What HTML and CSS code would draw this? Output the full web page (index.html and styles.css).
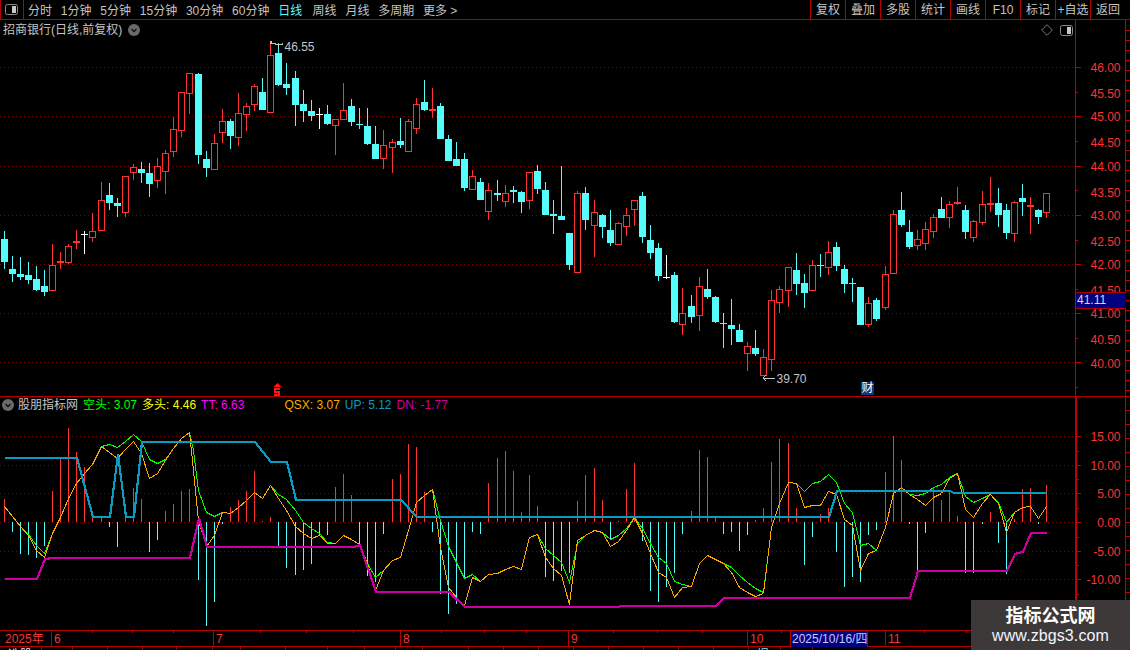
FILE: index.html
```html
<!DOCTYPE html>
<html lang="zh-CN">
<head>
<meta charset="utf-8">
<title>招商银行 日线</title>
<link rel="stylesheet" href="styles.css">
</head>
<body>
<div class="app">
  <header class="toolbar">
    <div class="panel-toggle">
      <svg class="panel-icon" width="13" height="11" viewBox="0 0 13 11"><rect x="0.5" y="0.5" width="12" height="10" rx="2" fill="none" stroke="#8a8a8a"/><rect x="7" y="2" width="4" height="7" fill="#c8c8c8"/></svg>
    </div>
    <nav class="periods">
      <span>分时</span><span>1分钟</span><span>5分钟</span><span>15分钟</span><span>30分钟</span><span>60分钟</span><span class="active">日线</span><span>周线</span><span>月线</span><span>多周期</span><span>更多 &gt;</span>
    </nav>
    <div class="actions">
      <span>复权</span><span>叠加</span><span>多股</span><span>统计</span><span>画线</span><span>F10</span><span>标记</span><span>+自选</span><span>返回</span>
    </div>
  </header>

  <section class="pane pane-main">
    <div class="plot">
      <svg id="main-plot" class="chart" width="1075" height="376" viewBox="0 20 1075 376"></svg>
      <div class="chart-title">
        <span>招商银行(日线,前复权)</span>
        <svg class="round-icon" width="12" height="12" viewBox="0 0 12 12"><circle cx="6" cy="6" r="6" fill="#6a6a6a"/><path d="M3.5 5l2.5 2.5L8.5 5" fill="none" stroke="#111" stroke-width="1.4"/></svg>
      </div>
      <div class="chart-tools">
        <svg width="12" height="12" viewBox="0 0 12 12"><path d="M6 .7L11.3 6 6 11.3.7 6z" fill="none" stroke="#777"/></svg>
        <svg width="13" height="11" viewBox="0 0 13 11"><rect x="0.5" y="0.5" width="12" height="10" rx="2" fill="none" stroke="#8a8a8a"/><rect x="7" y="2" width="4" height="7" fill="#c8c8c8"/></svg>
      </div>
      <span class="fin-mark">财</span>
    </div>
    <div class="axis">
      <svg id="main-axis" class="chart" width="55" height="376" viewBox="1075 20 55 376">
        <g class="axis-labels">
          <text x="1120.5" y="72">46.00</text><text x="1120.5" y="98">45.50</text>
          <text x="1120.5" y="121">45.00</text><text x="1120.5" y="147">44.50</text>
          <text x="1120.5" y="171">44.00</text><text x="1120.5" y="197">43.50</text>
          <text x="1120.5" y="220">43.00</text><text x="1120.5" y="246">42.50</text>
          <text x="1120.5" y="269">42.00</text><text x="1120.5" y="295">41.50</text>
          <text x="1120.5" y="318">41.00</text><text x="1120.5" y="344">40.50</text>
          <text x="1120.5" y="368">40.00</text>
        </g>
      </svg>
      <div class="price-tag">41.11</div>
    </div>
  </section>

  <section class="pane pane-sub">
    <div class="plot">
      <svg id="sub-plot" class="chart" width="1075" height="233" viewBox="0 397 1075 233"></svg>
      <div class="legend">
        <svg class="round-icon" width="12" height="12" viewBox="0 0 12 12"><circle cx="6" cy="6" r="6" fill="#6a6a6a"/><path d="M3.5 5l2.5 2.5L8.5 5" fill="none" stroke="#111" stroke-width="1.4"/></svg>
        <span class="legend-name">股朋指标网</span>
        <span class="lg-green">空头: 3.07</span>
        <span class="lg-yellow">多头: 4.46</span>
        <span class="lg-magenta">TT: 6.63</span>
        <span class="lg-orange">QSX: 3.07</span>
        <span class="lg-blue">UP: 5.12</span>
        <span class="lg-purple">DN: -1.77</span>
      </div>
    </div>
    <div class="axis axis-sub">
      <svg id="sub-axis" class="chart" width="55" height="233" viewBox="1075 397 55 233">
        <g class="axis-labels">
          <text x="1120.5" y="441">15.00</text><text x="1120.5" y="470">10.00</text>
          <text x="1120.5" y="498">5.00</text><text x="1120.5" y="527">0.00</text>
          <text x="1120.5" y="556">-5.00</text><text x="1120.5" y="584">-10.00</text>
        </g>
      </svg>
    </div>
  </section>

  <div class="datebar">
    <span>2025年</span><span class="sep">6</span><span class="sep">7</span><span class="sep">8</span><span class="sep">9</span><span class="sep">10</span><span class="date-now">2025/10/16/四</span><span></span><span class="sep">11</span>
    <svg id="date-ticks" class="date-ticks" width="971" height="4" viewBox="0 0 971 4"></svg>
  </div>

  <div class="tabs">
    <span class="tab-white">选股</span><span class="tab-white">·</span><span></span><span></span><span></span><span></span><span></span><span></span><span></span><span></span><span></span><span></span><span></span><span></span><span></span><span></span><span></span><span></span><span></span><span></span><span></span><span class="tab-cyan">提示</span><span></span>
  </div>

  <aside class="watermark">
    <strong>指标公式网</strong>
    <span>www.zbgs3.com</span>
  </aside>
</div>
<script src="chart.js"></script>
</body>
</html>
```
FILE: styles.css
```css
* { box-sizing: border-box; }
html, body {
  margin: 0;
  height: 100%;
  background: #000;
  overflow: hidden;
}
body {
  font: 12px/16px "Liberation Sans", "Noto Sans CJK SC", sans-serif;
  color: #c4c4c4;
}
.app {
  position: relative;
  width: 1130px;
  height: 650px;
  display: flex;
  flex-direction: column;
  overflow: hidden;
}

/* toolbar */
.toolbar {
  flex: none;
  height: 20px;
  display: flex;
  align-items: stretch;
  border-bottom: 1px solid #b40000;
}
.panel-toggle {
  width: 24px;
  display: flex;
  align-items: center;
  justify-content: center;
  padding-right: 2px;
  border-right: 1px solid #b40000;
  border-left: 1px solid #b40000;
}
.periods {
  display: flex;
  align-items: center;
  gap: 8.8px;
  padding: 2px 0 0 4px;
}
.periods .active { color: #54fcfc; margin-right: 1.5px; }
.actions {
  margin-left: auto;
  margin-right: 5px;
  display: flex;
}
.actions span {
  width: 35px;
  border-left: 1px solid #b40000;
  text-align: center;
  line-height: 21px;
}

/* panes */
.pane {
  flex: none;
  display: flex;
  border-bottom: 1px solid #b40000;
}
.pane-main { height: 377px; }
.pane-sub { height: 233px; border-bottom: 0; }
.plot {
  position: relative;
  width: 1075px;
  flex: none;
}
.axis {
  position: relative;
  width: 55px;
  flex: none;
}
.chart {
  display: block;
  shape-rendering: crispEdges;
}
.axis-labels text {
  fill: #ff3232;
  font: 12px "Liberation Sans", sans-serif;
  text-anchor: end;
}
.chart-label {
  fill: #c4c4c4;
  font: 12px "Liberation Sans", sans-serif;
}
.chart-title {
  position: absolute;
  left: 3px;
  top: 2px;
  display: flex;
  align-items: center;
  gap: 6px;
}
.round-icon { flex: none; }
.chart-tools {
  position: absolute;
  right: 2px;
  top: 4px;
  display: flex;
  align-items: center;
  gap: 7px;
}
.fin-mark {
  position: absolute;
  left: 861px;
  top: 362px;
  width: 13px;
  height: 13px;
  line-height: 13px;
  text-align: center;
  color: #fff;
  background: #0a3a78;
}
.price-tag {
  position: absolute;
  left: 1px;
  top: 272px;
  width: 50px;
  height: 17px;
  padding-left: 1px;
  line-height: 15px;
  color: #d8d8d8;
  background: #000080;
  border-top: 1px solid #b40000;
  border-bottom: 1px solid #b40000;
}

/* indicator legend */
.legend {
  position: absolute;
  left: 2px;
  top: 0;
  height: 16px;
  display: flex;
  align-items: center;
  white-space: nowrap;
}
.legend-name { margin-left: 4px; }
.lg-green { color: #00ff00; margin-left: 5px; }
.lg-yellow { color: #ffff00; margin-left: 5px; }
.lg-magenta { color: #ff00ff; margin-left: 5px; }
.lg-orange { color: #ffaa00; margin-left: 40px; }
.lg-blue { color: #0a9cbf; margin-left: 5px; }
.lg-purple { color: #cc00a0; margin-left: 5px; }

/* date axis */
.datebar {
  position: relative;
  flex: none;
  height: 17px;
  display: grid;
  grid-template-columns: 51px 162px 187px 168px 179px 43px 78px 17px 1fr;
  border-top: 1px solid #b40000;
  border-bottom: 1px solid #b40000;
  color: #ff3232;
  line-height: 16px;
}
.datebar span { padding-left: 5px; white-space: nowrap; }
.datebar .sep { padding-left: 2px; border-left: 1px solid #b40000; }
.datebar .date-now {
  padding-left: 1px;
  color: #c8c8ff;
  background: #000080;
  border-left: 1px solid #b40000;
  border-right: 1px solid #b40000;
}
.date-ticks {
  position: absolute;
  left: 0;
  top: 0;
  shape-rendering: crispEdges;
}

/* tab strip, cut by the window edge */
.tabs {
  flex: none;
  height: 3px;
  display: grid;
  grid-template-columns: 42px 31px 35px 35px 34px 36px 28px 45px 42px 37px 31px 27px 46px 35px 35px 35px 35px 35px 35px 35px 35px 32px 32px;
  overflow: hidden;
}
.tabs span {
  border-right: 1px solid #b40000;
  padding-left: 8px;
  line-height: 16px;
  overflow: hidden;
}
.tabs .tab-white { color: #e0e0e0; }
.tabs .tab-cyan { color: #54fcfc; }

/* watermark overlay */
.watermark {
  position: absolute;
  left: 971px;
  top: 600px;
  width: 159px;
  height: 50px;
  padding-top: 5px;
  display: flex;
  flex-direction: column;
  align-items: center;
  background: #3d3938;
  color: #fff;
}
.watermark strong {
  font-size: 18px;
  line-height: 22px;
  font-weight: 700;
}
.watermark span {
  font-size: 16px;
  line-height: 18px;
  letter-spacing: .1px;
  color: #f2f6ff;
}
```
FILE: chart.js
```js
// Candles: [column, colour, wickTop, wickBottom, bodyTop, bodyBottom]
var C = 'c', R = 'r', W = 'w';
var candles = [
[4,C,231,269,239,262],[12,C,256,282,269,274],[20,C,257,280,274,277],[28,C,262,284,275,280],[36,C,266,291,279,290],[44,C,270,296,286,292],
[52,R,244,290,265,290],[60,R,252,269,261,263],[68,R,244,264,246,262],[76,R,230,249,241,243],[84,W,231,254,234,235],[92,R,213,242,231,237],
[101,R,182,230,200,230],[109,C,183,210,195,203],[117,C,198,217,203,206],[125,R,176,217,176,212],[133,R,164,180,167,172],[141,C,162,183,169,173],
[149,C,163,197,173,184],[157,R,158,188,166,180],[165,R,150,194,153,171],[173,R,117,157,129,151],[181,R,92,137,92,130],[189,R,73,114,73,93],
[198,C,73,164,74,155],[206,C,151,177,159,168],[214,R,134,169,143,169],[222,R,109,143,121,132],[230,C,119,149,121,136],[238,R,93,146,113,137],
[246,R,103,131,106,114],[254,R,84,111,86,104],[262,C,78,110,92,110],[270,R,43,112,55,112],[278,C,43,86,53,85],[286,C,63,95,84,88],
[295,C,71,126,78,105],[303,C,90,122,104,111],[311,C,100,121,111,116],[319,W,108,129,114,115],[327,C,105,125,114,124],[335,R,119,155,119,125],
[343,R,83,119,110,119],[351,C,99,126,106,122],[359,C,108,129,124,125],[367,C,108,145,126,144],[375,C,126,159,144,159],[383,R,130,169,145,158],
[392,R,139,173,142,147],[400,C,118,148,141,145],[408,R,119,151,121,151],[416,R,98,134,104,128],[424,C,80,111,102,110],[432,R,88,118,109,111],
[440,C,103,139,106,139],[448,C,135,161,139,161],[456,C,142,166,159,166],[464,C,153,191,159,188],[472,R,170,190,176,189],[480,C,178,200,182,200],
[488,R,183,220,190,211],[497,C,180,201,193,195],[505,R,185,207,193,201],[513,C,186,203,190,192],[521,C,191,213,192,202],[529,R,172,209,172,200],
[537,C,165,194,171,189],[545,C,182,215,190,215],[553,C,200,234,214,216],[561,C,166,220,216,220],[569,C,233,270,233,265],[577,R,191,272,193,272],
[585,C,187,230,193,220],[594,R,200,257,212,225],[602,C,214,238,215,227],[610,C,210,246,230,243],[618,R,222,244,223,244],[626,R,208,236,215,226],
[634,R,200,226,200,209],[642,C,192,243,196,237],[650,C,225,259,240,253],[658,C,243,281,248,276],[666,W,255,279,277,278],[674,C,272,323,275,322],
[682,R,288,335,313,324],[691,C,295,323,306,317],[699,R,277,331,286,315],[707,C,269,299,289,297],[715,C,296,323,297,322],[723,C,313,348,323,324],
[731,C,299,345,325,329],[739,C,324,342,330,342],[747,R,342,371,346,353],[755,C,330,356,348,354],[763,R,349,375,357,375],[771,R,290,371,300,359],
[779,R,286,313,289,302],[788,R,267,307,267,290],[796,C,253,295,270,284],[804,C,274,308,283,293],[812,R,260,290,265,290],[820,C,254,277,265,266],
[828,R,241,275,252,267],[836,C,242,271,247,266],[844,C,265,293,269,284],[852,C,278,302,283,284],[860,C,287,325,287,325],[868,R,297,327,303,324],
[876,C,298,321,300,319],[885,R,266,310,274,307],[893,R,210,273,214,273],[901,C,192,227,210,225],[909,C,220,249,232,247],[917,R,230,250,239,245],
[925,R,222,250,229,243],[933,R,214,238,217,231],[941,C,197,218,209,218],[949,R,201,228,204,217],[957,R,187,205,202,204],[965,C,205,239,210,232],
[973,R,220,242,221,237],[982,R,191,225,204,222],[990,R,177,212,203,205],[998,C,188,227,203,215],[1006,C,204,239,210,233],[1014,R,201,242,202,233],
[1022,C,184,216,198,202],[1030,R,197,234,205,207],[1038,C,209,224,210,217],[1046,R,193,218,193,212]
];

// Histogram: [column, tipY]; above the zero line is red, below it is cyan
var ZERO = 522;
var bars = [
[4,499],[12,532],[20,554],[28,555],[36,558],[44,546],[52,491],[60,458],[68,428],[76,452],[84,467],[92,511],[101,517],[109,527],[117,547],[125,517],[133,488],[141,499],[149,552],[157,540],[165,511],[173,504],[181,491],[189,489],[198,580],[206,626],[214,602],[222,524],[230,507],[238,500],[246,491],[254,471],[262,521],[270,517],[278,548],[286,568],[295,575],[303,570],[311,564],[319,535],[327,535],[335,487],[343,474],[351,495],[359,544],[367,576],[375,582],
[383,534],[392,479],[400,474],[408,444],[416,447],[424,492],[432,532],[440,594],[448,614],[456,604],[464,578],[472,532],[480,534],[488,483],[497,458],[505,451],[513,471],[521,512],[529,475],[537,506],[545,577],[553,581],[561,571],[569,573],[577,501],[585,475],[594,468],[602,500],[610,540],[618,521],[626,489],[634,463],[642,541],[650,591],[658,602],[666,587],[674,573],[682,534],[691,511],[699,450],[707,457],[715,517],[723,534],[731,532],[739,551],[747,535],[755,520],
[763,508],[771,462],[779,439],[788,443],[796,508],[804,565],[812,537],[820,514],[828,508],[836,552],[844,587],[852,577],[860,582],[868,535],[876,530],[885,472],[893,436],[901,460],[909,524],[917,570],[925,533],[933,487],[941,500],[949,491],[957,516],[965,573],[973,573],[982,524],[990,512],[998,543],[1006,574],[1014,519],[1022,489],[1030,488],[1038,524],[1046,485]
];

var orange = [
[4,506],[12,516],[20,526],[28,535],[36,550],[44,557],[52,533],[60,517],[68,498],[76,483],[84,473],[92,464],[101,446],[109,452],[117,458],[125,449],[133,441],[141,453],[149,478],[157,473],[165,460],[173,448],[181,438],[189,432],[193,470],[198,520],[206,546],[214,535],[222,512],[230,513],[238,507],[246,500],[254,492],[262,498],[270,485],[278,498],[286,510],[295,526],[303,533],[311,538],[319,535],[327,543],[335,543],[343,535],[351,539],[359,544],[367,563],[375,590],[383,570],[392,560],[400,557],[408,530],[416,502],[424,495],[432,489],[440,547],[448,587],[456,597],[464,605],[472,577],[480,581],[488,574],[497,573],[505,569],[513,566],[521,569],[529,537],[537,534],[545,557],[553,568],[561,575],[569,604],[577,540],[585,535],[594,530],[602,532],[610,546],[618,541],[626,530],[634,517],[642,533],[650,553],[658,572],[666,577],[674,597],[682,587],[691,586],[699,563],[707,555],[715,559],[723,563],[731,572],[739,587],[747,592],[755,596],[763,593],[771,527],[779,503],[788,482],[796,483],[804,507],[812,505],[820,505],[828,491],[836,494],[844,519],[852,525],[860,570],[868,553],[876,550],[885,527],[893,493],[901,487],[909,494],[917,499],[925,505],[933,497],[941,493],[949,478],[957,473],[965,509],[973,517],[982,503],[990,494],[998,503],[1006,532],[1014,512],[1022,507],[1030,506],[1038,518],[1046,506]
];

// Where the green line leaves the orange one (it is drawn under it)
var greenOff = {
28:534,36:545,44:553,109:444,117:447,125:441,133:434,141:441,149:459,157:463,165:459,193:450,198:490,206:512,214:516,278:494,286:499,295:510,303:522,311:528,319:533,327:542,367:563,375:577,440:520,448:546,456:562,464:578,472:574,545:548,553:555,561:562,569:582,577:543,610:539,618:535,626:528,642:528,650:543,658:557,666:563,674:581,682:584,731:567,739:575,747:582,755:588,763:592,804:491,812:483,820:481,828:474,836:482,844:503,852:512,860:545,868:543,917:495,925:493,933:487,941:484,949:477,965:496,973:502,982:498,998:502,1006:522
};

var blue = [[4,457],[76,457],[92,516],[109,516],[117,453],[125,516],[133,516],[141,441],[254,441],[270,461],[286,461],[295,499],[400,499],[416,516],[828,516],[836,490],[949,490],[953,492],[1046,492]];
var magenta = [[4,578],[36,578],[44,558],[52,557],[189,557],[198,517],[206,546],[353,546],[359,544],[375,591],[448,591],[464,606],[618,606],[619,605],[715,605],[723,597],[909,597],[917,570],[1006,570],[1014,553],[1022,551],[1030,532],[1046,532]];

var NS = 'http://www.w3.org/2000/svg';
function el(parent, name, attrs) {
  var node = document.createElementNS(NS, name);
  for (var k in attrs) node.setAttribute(k, attrs[k]);
  parent.appendChild(node);
  return node;
}
function grid(svg, ys) {
  ys.forEach(function (y) {
    el(svg, 'line', { x1: 0, x2: 1075, y1: y + 0.5, y2: y + 0.5, stroke: '#7a0000', 'stroke-dasharray': '1 3' });
  });
}
function line(svg, pts, colour, width, offset) {
  el(svg, 'polyline', {
    points: pts.map(function (p) { return (p[0] + offset) + ',' + (p[1] + offset); }).join(' '),
    fill: 'none', stroke: colour, 'stroke-width': width
  });
}
function ticks(svg, x, ys, len, colour) {
  ys.forEach(function (y) {
    el(svg, 'rect', { x: x, y: y, width: len, height: 1, fill: colour });
  });
}

var COL = { c: '#54fcfc', r: '#ff3232', w: '#ffffff' };
var main = document.getElementById('main-plot');
grid(main, [67, 116, 166, 215, 264, 313, 362]);
candles.forEach(function (d) {
  var col = d[0], colour = COL[d[1]], h = d[5] - d[4];
  el(main, 'rect', { x: col, y: d[2], width: 1, height: d[3] - d[2], fill: colour });
  if (d[1] === R && h > 2) {
    el(main, 'rect', { x: col - 2.5, y: d[4] + 0.5, width: 6, height: h, fill: '#000', stroke: colour });
  } else {
    el(main, 'rect', { x: col - 3, y: d[4], width: 7, height: h, fill: colour });
  }
});

// High / low annotations and the red signal mark
el(main, 'path', { d: 'M270 41h1v2h4v1h7v-1M272 42l-2 1 2 1', fill: 'none', stroke: '#c4c4c4' });
el(main, 'text', { x: 284.5, y: 50.5, class: 'chart-label' }).textContent = '46.55';
el(main, 'path', { d: 'M763 378h12M766 375l-3 3 3 3', fill: 'none', stroke: '#c4c4c4' });
el(main, 'text', { x: 776.5, y: 383, class: 'chart-label' }).textContent = '39.70';
el(main, 'path', { d: 'M277 383l-4 4h8zM274 388h6v2h-6zM274 390h2v1h-2zM274 391h6v2h-6zM278 393h2v1h-2zM274 394h6v2h-6z', fill: '#ff1414' });

var sub = document.getElementById('sub-plot');
grid(sub, [436, 465, 493, 522, 551, 579]);
bars.forEach(function (b) {
  var up = b[1] < ZERO;
  el(sub, 'rect', {
    x: b[0], y: up ? b[1] : ZERO, width: 1,
    height: up ? ZERO - b[1] : b[1] - ZERO,
    fill: up ? '#ff3232' : '#54fcfc'
  });
});
var green = orange.filter(function (p) { return p[0] >= 20; }).map(function (p) {
  return [p[0], greenOff[p[0]] !== undefined ? greenOff[p[0]] : p[1]];
});
line(sub, green, '#00ff00', 1, 0.5);
line(sub, orange, '#ffaa00', 1, 0.5);
line(sub, magenta, '#cc00a0', 2.2, 1);
line(sub, blue, '#0a9cbf', 2.2, 1);

var RED = '#c00000';
var mainAxis = document.getElementById('main-axis');
el(mainAxis, 'rect', { x: 1075, y: 20, width: 1, height: 376, fill: RED });
el(mainAxis, 'rect', { x: 1125, y: 20, width: 1, height: 376, fill: RED });
ticks(mainAxis, 1075, [67, 116, 166, 215, 264, 313, 362], 6, RED);
ticks(mainAxis, 1075, [92, 141, 190, 240, 289, 338, 387], 3, RED);
var edge = [];
for (var y = 30; y < 396; y += 10) edge.push(y);
ticks(mainAxis, 1126, edge, 4, RED);

var subAxis = document.getElementById('sub-axis');
el(subAxis, 'rect', { x: 1075, y: 397, width: 2, height: 233, fill: RED });
el(subAxis, 'rect', { x: 1125, y: 397, width: 1, height: 233, fill: RED });
ticks(subAxis, 1075, [436, 465, 493, 522, 551, 579], 6, RED);
ticks(subAxis, 1075, [451, 479, 508, 537, 565, 594, 608], 4, RED);
var edgeSub = [];
for (var ys = 410; ys < 630; ys += 14) edgeSub.push(ys);
ticks(subAxis, 1126, edgeSub, 4, RED);

var dateTicks = document.getElementById('date-ticks');
[92, 132, 173, 260, 306, 353, 441, 484, 526, 613, 657, 702, 781, 924, 966].forEach(function (x) {
  el(dateTicks, 'rect', { x: x, y: 0, width: 1, height: 2, fill: RED });
});
```
